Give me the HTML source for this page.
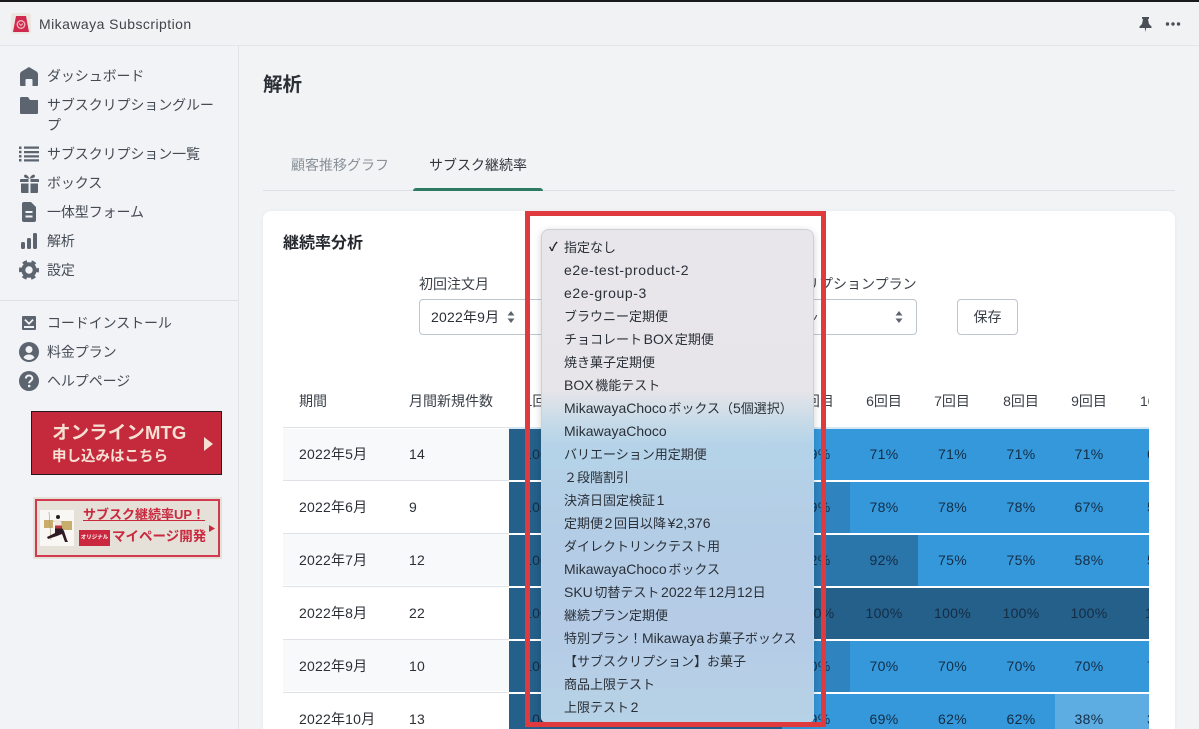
<!DOCTYPE html>
<html lang="ja"><head><meta charset="utf-8"><title>Mikawaya Subscription</title>
<style>
*{box-sizing:border-box}
html,body{margin:0;padding:0;width:1199px;height:729px;overflow:hidden;background:#f1f3f5;font-family:"Liberation Sans","Noto Sans CJK JP",sans-serif;color:#2b2f36;font-size:14px}
#root{position:absolute;left:0;top:0;width:1199px;height:729px;overflow:hidden}
.a{position:absolute;white-space:nowrap}
.t{position:absolute;white-space:nowrap;line-height:20px;height:20px}
.nav{position:absolute;left:47px;white-space:nowrap;line-height:20px;font-size:14px;color:#454b55;letter-spacing:-.1px}
svg{position:absolute;display:block}
.ic{fill:#5c6470}
.c{position:absolute;height:51px;line-height:51px;text-align:center;font-size:14px;color:#142c44;letter-spacing:.3px}
.d{background:#24608a}.b{background:#3498db}.m{background:#2f84c0}.e{background:#2a75a9}.l{background:#5dade2}
.dd div{position:absolute;left:22px;height:23px;line-height:23px;font-size:13px;color:#2a3038;white-space:nowrap;word-spacing:-2px}
.dd i{font-style:normal;font-size:14px;letter-spacing:0}
.dd i.w{letter-spacing:.6px}
.h{position:absolute;top:391px;line-height:20px;font-size:14px;color:#3a3f47;white-space:nowrap;transform:translateX(-50%)}
.rt{position:absolute;left:299px;font-size:14px;line-height:20px;color:#2b2f36;letter-spacing:.2px}
.rn{position:absolute;left:409px;font-size:14px;line-height:20px;color:#2b2f36;letter-spacing:.2px}
.ln{position:absolute;left:283px;width:226px;height:1px;background:#dfe3e8}
.z{position:absolute;left:283px;width:226px;height:51px;background:#f7f9fb}
</style></head><body><div id="root">
<div class="a" style="left:0;top:0;width:1199px;height:2px;background:#1a1a1a"></div>
<div class="a" style="left:0;top:2px;width:1199px;height:43px;background:#f1f2f3"></div>
<div class="a" style="left:0;top:45px;width:1199px;height:1px;background:#e4e6e8"></div>

<div class="a" style="left:11px;top:13px;width:20px;height:21px;background:#ece6e1;border-radius:3px"></div>
<svg style="left:13px;top:15px" width="16" height="18" viewBox="0 0 16 18"><path d="M3 1h10l3 16H0z" fill="#cf2a4d"/><circle cx="8" cy="9.500" r="3.800" fill="none" stroke="#f3b6c2" stroke-width="1.300"/><path d="M6 8.500l2 2 2-2" fill="none" stroke="#f3b6c2" stroke-width="1"/></svg>
<div class="t" style="left:39px;top:14px;font-size:14px;letter-spacing:.45px;color:#3f444b">Mikawaya Subscription</div>
<svg style="left:1138px;top:16px" width="15" height="17" viewBox="0 0 15 17"><path style="fill:#4a4f57" d="M4 1h7v1.500L10 3.500 11 8l2.500 2.500V12H8.200L7.500 16 6.800 12H1.500v-1.500L4 8l1-4.500L4 2.500z"/></svg>
<svg style="left:1165px;top:21px" width="16" height="6" viewBox="0 0 16 6"><circle cx="2.500" cy="3" r="1.700" fill="#4a4f57"/><circle cx="8" cy="3" r="1.700" fill="#4a4f57"/><circle cx="13.500" cy="3" r="1.700" fill="#4a4f57"/></svg>

<div class="a" style="left:0;top:46px;width:239px;height:683px;background:#f1f3f6;border-right:1px solid #e0e3e7"></div>
<svg style="left:20px;top:67px" width="18" height="19" viewBox="0 0 18 19"><path class="ic" d="M9 0 1.500 4.500Q0 5.500 0 7.500V18a1 1 0 0 0 1 1h4.500v-6a1 1 0 0 1 1-1h5a1 1 0 0 1 1 1v6H17a1 1 0 0 0 1-1V7.500Q18 5.500 16.500 4.500z"/></svg>
<div class="nav" style="top:66px">ダッシュボード</div>
<svg style="left:20px;top:96px" width="18" height="19" viewBox="0 0 18 19"><path class="ic" d="M1.500 1H8l2 3h6.500A1 1 0 0 1 18 5v12a1 1 0 0 1-1 1H1a1 1 0 0 1-1-1V2.500A1.500 1.500 0 0 1 1.500 1z"/></svg>
<div class="nav" style="top:95px">サブスクリプショングルー</div>
<div class="nav" style="top:115px">プ</div>
<svg style="left:19px;top:146px" width="20" height="16" viewBox="0 0 20 16"><path class="ic" d="M0 .5h2.500v2.500H0zM5 .5h15v2.200H5zM0 4.800h2.500v2.500H0zM5 5h15v2.200H5zM0 9h2.500v2.500H0zM5 9.300h15v2.200H5zM0 13h2.500v2.500H0zM5 13.300h15v2.200H5z"/></svg>
<div class="nav" style="top:144px">サブスクリプション一覧</div>
<svg style="left:20px;top:174px" width="19" height="19" viewBox="0 0 19 19"><path class="ic" d="M0 6a1 1 0 0 1 1-1h7.500v3H0zM10.500 5H18a1 1 0 0 1 1 1v2h-8.500zM1 9.500h7.500V19H2a1 1 0 0 1-1-1zM10.500 9.500H18V18a1 1 0 0 1-1 1h-6.500zM9.500 4.500C7 4.500 4 4 4 2s3-2.500 5.500 2.500C12-.5 15 0 15 2s-3 2.500-5.500 2.500z"/></svg>
<div class="nav" style="top:173px">ボックス</div>
<svg style="left:22px;top:202px" width="14" height="20" viewBox="0 0 14 20"><path class="ic" fill-rule="evenodd" d="M2 0h7l5 5v13a2 2 0 0 1-2 2H2a2 2 0 0 1-2-2V2a2 2 0 0 1 2-2zM3.500 9v2h7V9zM3.500 13.500v2h7v-2z"/></svg>
<div class="nav" style="top:202px">一体型フォーム</div>
<svg style="left:21px;top:233px" width="16" height="16" viewBox="0 0 16 16"><rect class="ic" x="0" y="9" width="4" height="7" rx="1.500"/><rect class="ic" x="6" y="5" width="4" height="11" rx="1.500"/><rect class="ic" x="12" y="0" width="4" height="16" rx="1.500"/></svg>
<div class="nav" style="top:231px">解析</div>
<svg style="left:19px;top:260px" width="20" height="20" viewBox="0 0 20 20"><circle cx="10" cy="10" r="5.700" fill="none" stroke="#5c6470" stroke-width="4"/><circle cx="10" cy="10" r="8.500" fill="none" stroke="#5c6470" stroke-width="3" stroke-dasharray="4.450 4.450" stroke-dashoffset="2.200"/></svg>
<div class="nav" style="top:260px">設定</div>
<div class="a" style="left:0;top:300px;width:238px;height:1px;background:#dcdfe3"></div>
<svg style="left:22px;top:316px" width="14" height="14" viewBox="0 0 14 14"><path class="ic" fill-rule="evenodd" d="M1 0h12a1 1 0 0 1 1 1v12a1 1 0 0 1-1 1H1a1 1 0 0 1-1-1V1a1 1 0 0 1 1-1zM3.500 3 7 6.500 10.500 3l1.200 1.200L7 9 2.300 4.200zM2 10v2h10v-2z"/></svg>
<div class="nav" style="top:313px">コードインストール</div>
<svg style="left:19px;top:342px" width="20" height="20" viewBox="0 0 20 20"><path class="ic" fill-rule="evenodd" d="M10 0a10 10 0 1 1 0 20 10 10 0 0 1 0-20zM10 4a3.500 3.500 0 1 0 0 7 3.500 3.500 0 0 0 0-7zM4.500 15.500C6 17.300 8 18 10 18s4-.7 5.500-2.500C14.500 13.500 12.500 12.500 10 12.500S5.500 13.500 4.500 15.500z"/></svg>
<div class="nav" style="top:342px">料金プラン</div>
<svg style="left:19px;top:371px" width="20" height="20" viewBox="0 0 20 20"><circle class="ic" cx="10" cy="10" r="10"/><path d="M6.800 7.500C7 5.500 8.300 4.500 10 4.500c2 0 3.300 1.200 3.300 2.900 0 2.500-3.100 2.600-3.100 4.800" fill="none" stroke="#f1f3f6" stroke-width="2"/><circle cx="10.200" cy="15" r="1.300" fill="#f1f3f6"/></svg>
<div class="nav" style="top:371px">ヘルプページ</div>

<div class="a" style="left:31px;top:411px;width:191px;height:64px;background:#c42a3c;border:1px solid #221a1c"></div>
<div class="a" style="left:52px;top:421px;font-size:18.500px;line-height:24px;font-weight:bold;color:#f6dfd3;letter-spacing:.1px">オンラインMTG</div>
<div class="a" style="left:52px;top:447px;font-size:14.500px;line-height:20px;font-weight:bold;color:#f6dfd3">申し込みはこちら</div>
<svg style="left:204px;top:437px" width="9" height="14" viewBox="0 0 9 14"><path d="M0 0l9 7-9 7z" fill="#f6dfd3"/></svg>

<div class="a" style="left:33px;top:497px;width:189px;height:62px;background:#e6e1d8"></div>
<div class="a" style="left:35px;top:499px;width:185px;height:58px;border:2px solid #d13a4c"></div>
<div class="a" style="left:40px;top:510px;width:34px;height:36px;background:#f8f7f4"></div>
<svg style="left:40px;top:510px" width="34" height="36" viewBox="0 0 34 36"><rect x="4" y="10" width="9" height="8" fill="#c9ad6c"/><rect x="21" y="11" width="11" height="9" fill="#c9ad6c"/><path d="M9 2 11 30M13 11 24 12" stroke="#a89a78" stroke-width=".6"/><circle cx="18" cy="7" r="2" fill="#222"/><path d="M15 10h6l1 7h-7z" fill="#f0e8e0"/><path d="M15 18h7l2 3 3 9 1 2h-3l-3-8-5 2-9 3-1-2 8-4z" fill="#2e1a22"/><path d="M15 15.500h7v3h-7z" fill="#b8323f"/></svg>
<div class="a" style="left:83px;top:506px;font-size:13px;line-height:18px;font-weight:bold;color:#c9283e;text-decoration:underline">サブスク継続率UP！</div>
<div class="a" style="left:79px;top:530px;width:31px;height:16px;background:#c9283e;color:#fff;font-size:5.500px;line-height:16px;text-align:center;font-weight:bold">オリジナル</div>
<div class="a" style="left:112px;top:527px;font-size:13.500px;line-height:20px;font-weight:bold;color:#c9283e">マイページ開発</div>
<svg style="left:209px;top:525px" width="6" height="7" viewBox="0 0 6 7"><path d="M0 0l6 3.500L0 7z" fill="#c9283e"/></svg>

<div class="a" style="left:263px;top:71px;font-size:19.500px;line-height:28px;font-weight:bold;color:#2b2f36">解析</div>
<div class="t" style="left:291px;top:155px;color:#8b9199">顧客推移グラフ</div>
<div class="t" style="left:429px;top:155px;color:#33383f">サブスク継続率</div>
<div class="a" style="left:263px;top:190px;width:912px;height:1px;background:#dcdfe3"></div>
<div class="a" style="left:413px;top:188px;width:130px;height:3px;background:#2f7a63;border-radius:3px 3px 0 0"></div>

<div class="a" style="left:263px;top:211px;width:912px;height:518px;background:#fff;border-radius:8px 8px 0 0;box-shadow:0 0 3px rgba(0,0,0,.06)"></div>
<div class="a" style="left:283px;top:233px;font-size:16px;line-height:22px;font-weight:bold;color:#24282e">継続率分析</div>
<div class="t" style="left:419px;top:274px;color:#3a3f47">初回注文月</div>
<div class="a" style="left:419px;top:299px;width:200px;height:36px;border:1px solid #bfc5cc;border-radius:4px"></div>
<div class="t" style="left:431px;top:307px;color:#2b2f36;letter-spacing:.2px">2022年9月</div>
<svg style="left:507px;top:311px" width="8" height="12" viewBox="0 0 8 12"><path d="M4 0l3.500 4.500h-7zM4 12 .5 7.500h7z" fill="#5c6470"/></svg>
<div class="t" style="left:749px;top:274px;color:#3a3f47">サブスクリプションプラン</div>
<div class="a" style="left:617px;top:299px;width:300px;height:36px;border:1px solid #bfc5cc;border-radius:4px"></div>
<svg style="left:812px;top:315px" width="5" height="6" viewBox="0 0 5 6"><path d="M4.500 0Q4 3 1 5.500" fill="none" stroke="#3a3f47" stroke-width="1"/></svg>
<svg style="left:895px;top:311px" width="8" height="12" viewBox="0 0 8 12"><path d="M4 0l3.500 4.500h-7zM4 12 .5 7.500h7z" fill="#5c6470"/></svg>
<div class="a" style="left:957px;top:299px;width:61px;height:36px;border:1px solid #bfc5cc;border-radius:4px;background:#fff;text-align:center;line-height:34px;color:#3a3f47">保存</div>

<div class="h" style="left:299px;transform:none">期間</div>
<div class="h" style="left:409px;transform:none">月間新規件数</div>
<div class="h" style="left:542.500px">1回目</div>
<div class="h" style="left:816px">5回目</div>
<div class="h" style="left:884px">6回目</div>
<div class="h" style="left:952px">7回目</div>
<div class="h" style="left:1021px">8回目</div>
<div class="h" style="left:1089px">9回目</div>
<div class="a" style="left:1140px;top:391px;width:9px;overflow:hidden;line-height:20px;color:#3a3f47">10回目</div>
<div class="a" style="left:283px;top:427px;width:226px;height:1px;background:#dfe3e8"></div>
<div class="a" style="left:509px;top:427px;width:640px;height:2px;background:#d6e7f3"></div>

<div class="z" style="top:429px"></div><div class="z" style="top:534px"></div><div class="z" style="top:640px"></div>
<div class="ln" style="top:480px"></div><div class="ln" style="top:533px"></div><div class="ln" style="top:586px"></div><div class="ln" style="top:639px"></div><div class="ln" style="top:692px"></div>
<div class="rt" style="top:444px">2022年5月</div><div class="rn" style="top:444px">14</div>
<div class="rt" style="top:497px">2022年6月</div><div class="rn" style="top:497px">9</div>
<div class="rt" style="top:550px">2022年7月</div><div class="rn" style="top:550px">12</div>
<div class="rt" style="top:603px">2022年8月</div><div class="rn" style="top:603px">22</div>
<div class="rt" style="top:656px">2022年9月</div><div class="rn" style="top:656px">10</div>
<div class="rt" style="top:709px">2022年10月</div><div class="rn" style="top:709px">13</div>

<div class="c d" style="left:509px;top:429px;width:273px;padding-right:206px">100%</div>
<div class="c d" style="left:509px;top:482px;width:273px;padding-right:206px">100%</div>
<div class="c d" style="left:509px;top:535px;width:273px;padding-right:206px">100%</div>
<div class="c d" style="left:509px;top:588px;width:273px;padding-right:206px">100%</div>
<div class="c d" style="left:509px;top:641px;width:273px;padding-right:206px">100%</div>
<div class="c d" style="left:509px;top:694px;width:273px;padding-right:206px">100%</div>

<div class="c b" style="left:782px;top:429px;width:68px">79%</div><div class="c b" style="left:850px;top:429px;width:68px">71%</div><div class="c b" style="left:918px;top:429px;width:69px">71%</div><div class="c b" style="left:987px;top:429px;width:68px">71%</div><div class="c b" style="left:1055px;top:429px;width:68px">71%</div>
<div class="c b" style="left:1123px;top:429px;width:26px;text-align:left;padding-left:24px;overflow:hidden">6</div>

<div class="c m" style="left:782px;top:482px;width:68px">89%</div><div class="c b" style="left:850px;top:482px;width:68px">78%</div><div class="c b" style="left:918px;top:482px;width:69px">78%</div><div class="c b" style="left:987px;top:482px;width:68px">78%</div><div class="c b" style="left:1055px;top:482px;width:68px">67%</div>
<div class="c b" style="left:1123px;top:482px;width:26px;text-align:left;padding-left:24px;overflow:hidden">5</div>

<div class="c e" style="left:782px;top:535px;width:68px">92%</div><div class="c e" style="left:850px;top:535px;width:68px">92%</div><div class="c b" style="left:918px;top:535px;width:69px">75%</div><div class="c b" style="left:987px;top:535px;width:68px">75%</div><div class="c b" style="left:1055px;top:535px;width:68px">58%</div>
<div class="c b" style="left:1123px;top:535px;width:26px;text-align:left;padding-left:24px;overflow:hidden">5</div>

<div class="c d" style="left:782px;top:588px;width:68px">100%</div><div class="c d" style="left:850px;top:588px;width:68px">100%</div><div class="c d" style="left:918px;top:588px;width:69px">100%</div><div class="c d" style="left:987px;top:588px;width:68px">100%</div><div class="c d" style="left:1055px;top:588px;width:68px">100%</div>
<div class="c d" style="left:1123px;top:588px;width:26px;text-align:left;padding-left:22px;overflow:hidden">1</div>

<div class="c m" style="left:782px;top:641px;width:68px">80%</div><div class="c b" style="left:850px;top:641px;width:68px">70%</div><div class="c b" style="left:918px;top:641px;width:69px">70%</div><div class="c b" style="left:987px;top:641px;width:68px">70%</div><div class="c b" style="left:1055px;top:641px;width:68px">70%</div>
<div class="c b" style="left:1123px;top:641px;width:26px;text-align:left;padding-left:24px;overflow:hidden">7</div>

<div class="c b" style="left:782px;top:694px;width:68px">69%</div><div class="c b" style="left:850px;top:694px;width:68px">69%</div><div class="c b" style="left:918px;top:694px;width:69px">62%</div><div class="c b" style="left:987px;top:694px;width:68px">62%</div><div class="c l" style="left:1055px;top:694px;width:68px">38%</div>
<div class="c l" style="left:1123px;top:694px;width:26px;text-align:left;padding-left:24px;overflow:hidden">3</div>

<div class="a dd" style="left:541px;top:229px;width:273px;height:493px;border:1px solid #cfced2;border-bottom:0;border-radius:8px 8px 4px 4px;background:linear-gradient(180deg,#e8e6ea 0,#e7e5e9 160px,#c9dbe8 190px,#b4d3e8 215px,#b4cde6 300px,#b5cbe6 400px,#b6d2e6 493px);box-shadow:0 2px 8px rgba(0,0,0,.18)">
<span class="a" style="left:7px;top:7px;font-size:12px;line-height:20px;color:#222;font-weight:bold">✓</span>
<div style="top:6px">指定なし</div>
<div style="top:29px"><i class="w">e2e-test-product-2</i></div>
<div style="top:52px"><i class="w">e2e-group-3</i></div>
<div style="top:75px">ブラウニー定期便</div>
<div style="top:98px">チョコレート <i>BOX</i> 定期便</div>
<div style="top:121px">焼き菓子定期便</div>
<div style="top:144px"><i>BOX</i> 機能テスト</div>
<div style="top:167px"><i>MikawayaChoco</i> ボックス（<i>5</i>個選択）</div>
<div style="top:190px"><i>MikawayaChoco</i></div>
<div style="top:213px">バリエーション用定期便</div>
<div style="top:236px">２段階割引</div>
<div style="top:259px">決済日固定検証 <i>1</i></div>
<div style="top:282px">定期便 <i>2</i> 回目以降 <i>¥2,376</i></div>
<div style="top:305px">ダイレクトリンクテスト用</div>
<div style="top:328px"><i>MikawayaChoco</i> ボックス</div>
<div style="top:351px"><i>SKU</i> 切替テスト <i>2022</i> 年 <i>12</i>月<i>12</i>日</div>
<div style="top:374px">継続プラン定期便</div>
<div style="top:397px">特別プラン！<i>Mikawaya</i> お菓子ボックス</div>
<div style="top:420px">【サブスクリプション】お菓子</div>
<div style="top:443px">商品上限テスト</div>
<div style="top:466px">上限テスト <i>2</i></div>
</div>
<div class="a" style="left:525px;top:211px;width:301px;height:516px;border:5px solid #df3a3d"></div>
</div></body></html>
